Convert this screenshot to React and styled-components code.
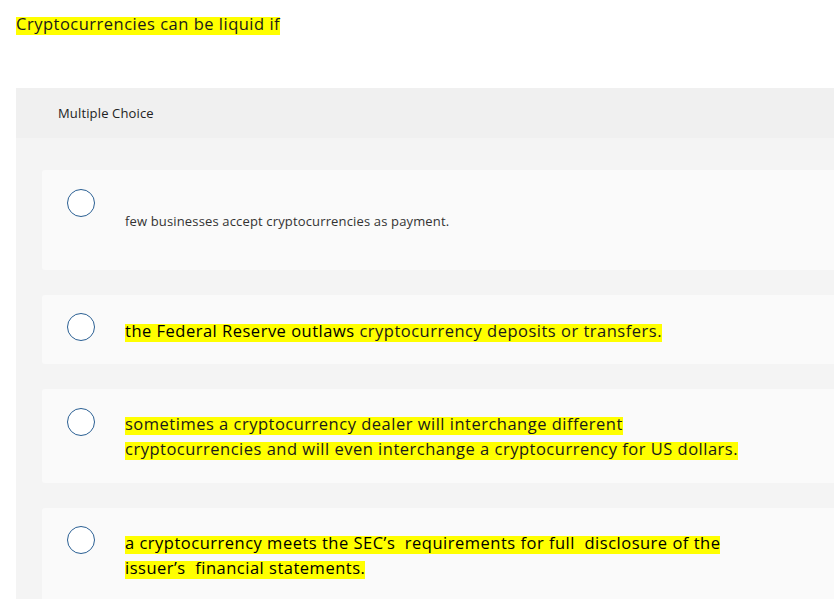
import React from 'react';
import styled, { createGlobalStyle } from 'styled-components';

const GlobalStyle = createGlobalStyle`
	html, body {
		margin: 0;
		padding: 0;
		background: #ffffff;
		overflow: hidden;
	}
	body {
		font-family: "Open Sans", "Liberation Sans", sans-serif;
		color: #222;
	}
`;

const Page = styled.div`
	width: 834px;
	height: 599px;
	padding: 13px 0 0 16px;
	box-sizing: border-box;
	overflow: hidden;
`;

// marker highlight, trimmed to the glyph band like the original
const Mark = styled.span`
	background: linear-gradient(
		to bottom,
		transparent 0%,
		transparent 22%,
		#ffff00 22%,
		#ffff00 100%
	);
	color: ${p => (p.dark ? '#000' : '#1a1a1a')};
`;

const Question = styled.div`
	font-size: 16.5px;
	letter-spacing: 0.5px;
	line-height: 22px;
	height: 22px;
	margin-bottom: 53px;
`;

const Panel = styled.div`
	background: #f4f4f4;
	display: flex;
	flex-direction: column;
`;

const PanelHeader = styled.div`
	height: 50px;
	background: #f0f0f0;
	display: flex;
	align-items: center;
	padding-left: 42px;
	font-size: 13px;
	letter-spacing: 0.15px;
	color: #222;
`;

const Choices = styled.div`
	display: flex;
	flex-direction: column;
	gap: 25px;
	padding: 32px 0 0 26px;
`;

const Card = styled.div`
	background: #fafafa;
	border-radius: 3px 0 0 3px;
	display: flex;
	align-items: flex-start;
	padding: ${p => p.pad || '19px 0 21px 25px'};
`;

const Radio = styled.div`
	width: 28px;
	height: 28px;
	box-sizing: border-box;
	flex: none;
	border-radius: 50%;
	border: 1.5px solid #2a5f93;
	background: #fff;
`;

const Label = styled.div`
	margin-left: 30px;
	font-size: ${p => (p.small ? '13px' : '16.5px')};
	letter-spacing: ${p => (p.small ? '0.15px' : '0.5px')};
	line-height: 25px;
	color: #333;
	padding-top: ${p => p.top || '4px'};
	max-width: 640px;
`;

const App = () => {
	return (
		<>
			<GlobalStyle />
			<Page>
				<Question>
					<Mark>Cryptocurrencies can be liquid if</Mark>
				</Question>
				<Panel>
					<PanelHeader>Multiple Choice</PanelHeader>
					<Choices>
						<Card pad="19px 0 36px 25px">
							<Radio />
							<Label small top="20px">
								few businesses accept cryptocurrencies as payment.
							</Label>
						</Card>
						<Card pad="18px 0 21px 25px">
							<Radio />
							<Label top="5px">
								<Mark dark>the Federal Reserve outlaws</Mark>
								<Mark> cryptocurrency deposits or transfers.</Mark>
							</Label>
						</Card>
						<Card pad="19px 0 22px 25px">
							<Radio />
							<Label top="3px">
								<Mark>
									sometimes a cryptocurrency dealer will interchange different
									<br />
									cryptocurrencies and will even interchange a cryptocurrency for US dollars.
								</Mark>
							</Label>
						</Card>
						<Card pad="18px 0 21px 25px">
							<Radio />
							<Label top="4px">
								<Mark dark>
									a cryptocurrency meets the SEC’s&nbsp; requirements for full&nbsp; disclosure of the
									<br />
									issuer’s&nbsp; financial statements.
								</Mark>
							</Label>
						</Card>
					</Choices>
				</Panel>
			</Page>
		</>
	);
};

export default App;
